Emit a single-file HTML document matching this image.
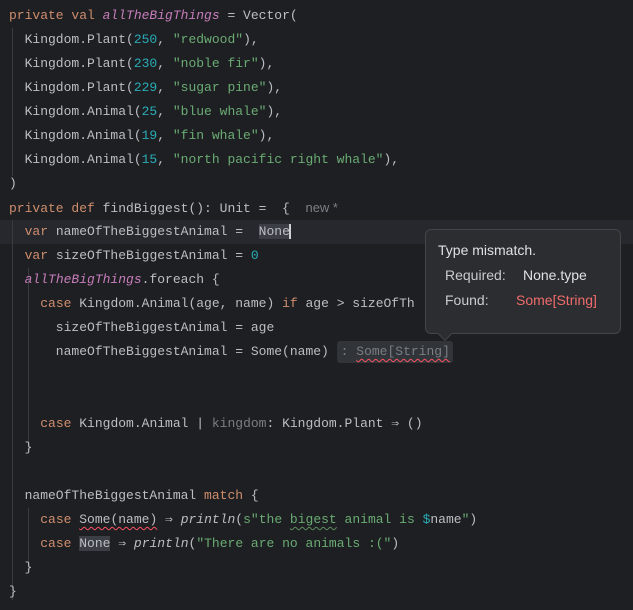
<!DOCTYPE html>
<html><head><style>
body{margin:0;background:#1e1f22;width:633px;height:610px;overflow:hidden;position:relative;font-family:"Liberation Mono",monospace;font-size:13px;color:#bcbec4}
.l{position:absolute;left:9px;height:24px;line-height:24px;white-space:pre}
.k{color:#cf8e6d}.n{color:#2aacb8}.s{color:#6aab73}.p{color:#c77dbb;font-style:italic}.g{color:#7a7e85}.i{font-style:italic}
.hl{position:absolute;left:0;top:220px;width:633px;height:24px;background:#26282e}
.guide{position:absolute;width:1px;background:#393b40}
.tip{position:absolute;left:425px;top:229px;width:194px;height:103px;background:#2b2d30;border:1px solid #43454a;border-radius:6px;font-family:"Liberation Sans",sans-serif;font-size:14px;color:#dfe1e5}
.wave{text-decoration:underline wavy #f75464;text-decoration-thickness:1px;text-underline-offset:3px}
.wg{text-decoration:underline wavy #5f8c5f;text-decoration-thickness:1px;text-underline-offset:3px}
</style></head><body>
<div class="hl"></div>
<div class="guide" style="left:12px;top:28px;height:148px"></div>
<div class="guide" style="left:12px;top:220px;height:380px"></div>
<div class="guide" style="left:28px;top:268px;height:180px"></div>
<div class="guide" style="left:28px;top:508px;height:60px"></div>
<div class="l" style="top:4px"><span class="k">private val </span><span class="p">allTheBigThings</span> = Vector(</div>
<div class="l" style="top:28px">  Kingdom.Plant(<span class="n">250</span>, <span class="s">"redwood"</span>),</div>
<div class="l" style="top:52px">  Kingdom.Plant(<span class="n">230</span>, <span class="s">"noble fir"</span>),</div>
<div class="l" style="top:76px">  Kingdom.Plant(<span class="n">229</span>, <span class="s">"sugar pine"</span>),</div>
<div class="l" style="top:100px">  Kingdom.Animal(<span class="n">25</span>, <span class="s">"blue whale"</span>),</div>
<div class="l" style="top:124px">  Kingdom.Animal(<span class="n">19</span>, <span class="s">"fin whale"</span>),</div>
<div class="l" style="top:148px">  Kingdom.Animal(<span class="n">15</span>, <span class="s">"north pacific right whale"</span>),</div>
<div class="l" style="top:172px">)</div>
<div class="l" style="top:196px"><span class="k">private def </span>findBiggest(): Unit =  {  <span class="g" style="font-family:'Liberation Sans',sans-serif">new *</span></div>
<div class="l" style="top:220px">  <span class="k">var </span>nameOfTheBiggestAnimal =  <span style="background:#3b3f45">None</span><span style="border-left:2px solid #ced0d6;margin-left:-1px"></span></div>
<div class="l" style="top:244px">  <span class="k">var </span>sizeOfTheBiggestAnimal = <span class="n">0</span></div>
<div class="l" style="top:268px">  <span class="p">allTheBigThings</span>.foreach {</div>
<div class="l" style="top:292px">    <span class="k">case </span>Kingdom.Animal(age, name) <span class="k">if</span> age &gt; sizeOfTh</div>
<div class="l" style="top:316px">      sizeOfTheBiggestAnimal = age</div>
<div class="l" style="top:340px">      nameOfTheBiggestAnimal = Some(name) <span class="g" style="background:#313438;border-radius:3px;padding:3px 3px 4px 4px"><span>: </span><span class="wave">Some[String]</span></span></div>
<div class="l" style="top:412px">    <span class="k">case </span>Kingdom.Animal | <span class="g">kingdom</span>: Kingdom.Plant ⇒ ()</div>
<div class="l" style="top:436px">  }</div>
<div class="l" style="top:484px">  nameOfTheBiggestAnimal <span class="k">match</span> {</div>
<div class="l" style="top:508px">    <span class="k">case </span><span class="wave">Some(name)</span> ⇒ <span class="i">println</span>(<span class="s">s"the <span class="wg">bigest</span> animal is </span><span class="n">$</span>name<span class="s">"</span>)</div>
<div class="l" style="top:532px">    <span class="k">case </span><span style="background:#3b3f45">None</span> ⇒ <span class="i">println</span>(<span class="s">"There are no animals :("</span>)</div>
<div class="l" style="top:556px">  }</div>
<div class="l" style="top:580px">}</div>
<div class="tip">
<div style="position:absolute;left:12px;top:12px">Type mismatch.</div>
<div style="position:absolute;left:19px;top:37px;color:#c9cbd0">Required:</div>
<div style="position:absolute;left:97px;top:37px">None.type</div>
<div style="position:absolute;left:19px;top:62px;color:#c9cbd0">Found:</div>
<div style="position:absolute;left:90px;top:62px;color:#f06c6c">Some[String]</div>
<div style="position:absolute;left:14px;bottom:-6px;width:9px;height:9px;background:#2b2d30;border-right:1px solid #43454a;border-bottom:1px solid #43454a;transform:rotate(45deg)"></div>
</div>
</body></html>
